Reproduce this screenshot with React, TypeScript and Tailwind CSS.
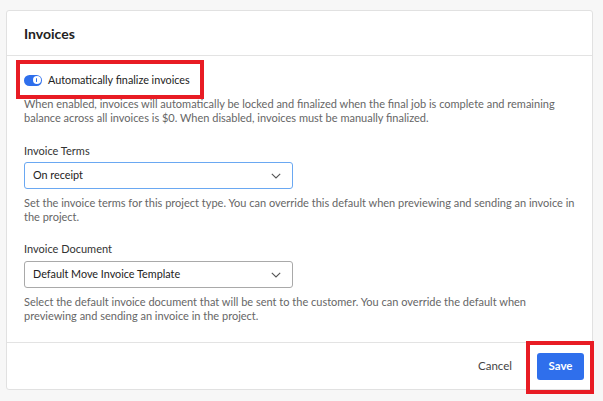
import React from "react";

function Chevron() {
  return (
    <svg width="10" height="6" viewBox="0 0 10 6" className="text-[#555]">
      <polyline points="0.8,0.8 5,5 9.2,0.8" fill="none" stroke="currentColor" strokeWidth="1.1" />
    </svg>
  );
}

function Select({ value, focused }: { value: string; focused?: boolean }) {
  return (
    <div
      className={`flex items-center justify-between w-[269px] h-[27px] rounded-[3px] bg-white pl-[8px] pr-[11px] border ${
        focused ? "border-[#6aa8f2]" : "border-[#a9a9a9]"
      }`}
    >
      <span className="text-[10.8px] text-[#222]">{value}</span>
      <Chevron />
    </div>
  );
}

export default function App() {
  return (
    <div
      className="relative w-[603px] h-[401px] bg-[#f7f7f7] pt-[10px] pl-[6px] overflow-hidden"
      style={{ fontFamily: "Lato, 'Open Sans', sans-serif" }}
    >
      <div className="w-[587px] h-[380px] bg-white border border-[#e1e1e1] rounded-[3px] flex flex-col">
        {/* Header */}
        <div className="h-[45px] flex items-center px-[17px] border-b border-[#e3e3e3]">
          <h1 className="text-[14px] font-bold text-[#222]">Invoices</h1>
        </div>

        {/* Body */}
        <div className="px-[17px] pt-[16px] pb-[19px] border-b border-[#e3e3e3]">
          <div className="flex items-center gap-[6px] h-[16px]">
            <div className="relative w-[18px] h-[11px] rounded-full bg-[#2f6fec]">
              <div className="absolute right-[1.5px] top-[1.5px] w-[8px] h-[8px] rounded-full bg-white flex items-center justify-center">
                <div className="w-[1.5px] h-[4px] bg-[#2f6fec] rounded-full" />
              </div>
            </div>
            <span className="text-[10.8px] text-[#222]">Automatically finalize invoices</span>
          </div>
          <p className="mt-[9px] text-[11px] leading-[14px] text-[#666]">
            When enabled, invoices will automatically be locked and finalized when the final job is complete and remaining
            balance across all invoices is $0. When disabled, invoices must be manually finalized.
          </p>

          <p className="mt-[19px] text-[11px] leading-[14px] text-[#333]">Invoice Terms</p>
          <div className="mt-[4px]">
            <Select value="On receipt" focused />
          </div>
          <p className="mt-[7px] text-[11px] leading-[14px] text-[#666]">
            Set the invoice terms for this project type. You can override this default when previewing and sending an invoice in
            the project.
          </p>

          <p className="mt-[18px] text-[11px] leading-[14px] text-[#333]">Invoice Document</p>
          <div className="mt-[5px]">
            <Select value="Default Move Invoice Template" />
          </div>
          <p className="mt-[7px] text-[11px] leading-[14px] text-[#666]">
            Select the default invoice document that will be sent to the customer. You can override the default when
            previewing and sending an invoice in the project.
          </p>
        </div>

        {/* Footer */}
        <div className="flex-1 flex items-center justify-end gap-[25px] pr-[8px]">
          <button className="text-[11.5px] text-[#444]">Cancel</button>
          <button className="w-[47px] h-[27px] rounded-[3px] bg-[#2f6fec] text-white text-[11.5px] font-bold">
            Save
          </button>
        </div>
      </div>

      {/* annotation boxes */}
      <div className="absolute left-[16px] top-[60px] w-[188px] h-[39px] border-[4px] border-[#e81c24]" />
      <div className="absolute left-[526px] top-[341px] w-[68px] h-[53px] border-[4px] border-[#e81c24]" />
    </div>
  );
}
